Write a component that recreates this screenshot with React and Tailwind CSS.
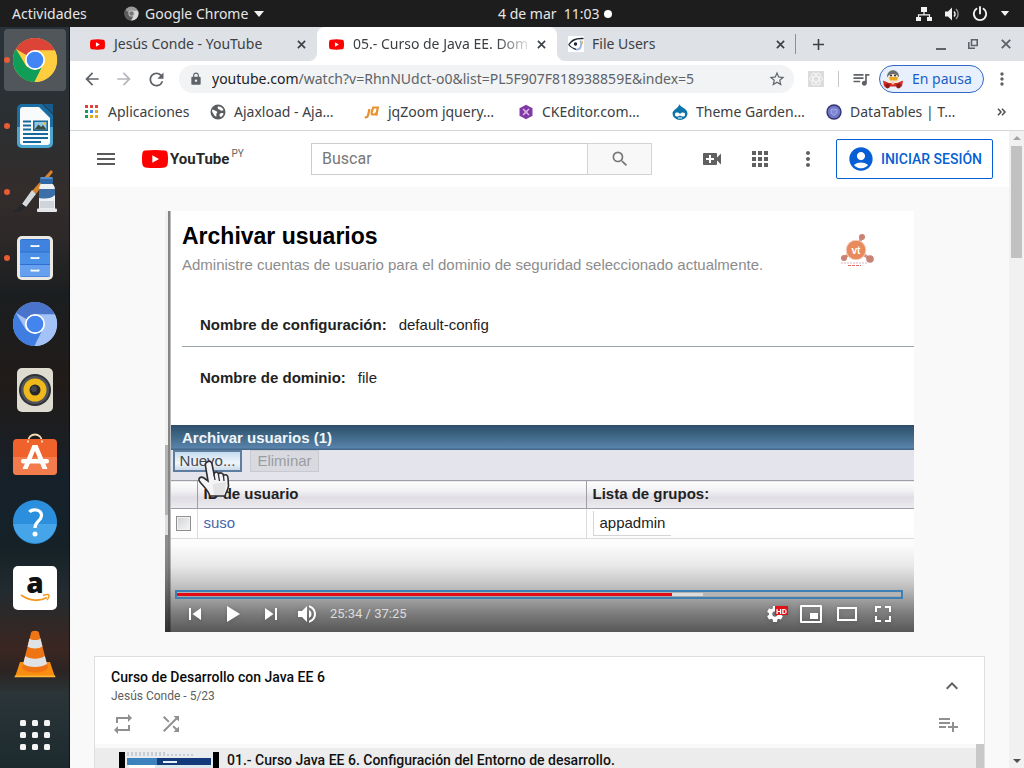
import React from "react";
import {
  MdMenu, MdSearch, MdVideoCall, MdApps, MdMoreVert, MdAccountCircle, MdRepeat, MdShuffle,
  MdPlaylistAdd, MdKeyboardArrowUp, MdLock, MdRefresh, MdArrowBack, MdArrowForward,
  MdStarBorder, MdPublic, MdQueueMusic, MdAdd,
} from "react-icons/md";

const ui = "font-['Noto_Sans','Open_Sans',sans-serif]";

/* ---------- dock icons ---------- */

function Chrome({ red = "#db4437", green = "#0f9d58", yellow = "#ffcd40", blue = "#4285f4" }) {
  return (
    <svg viewBox="0 0 48 48" className="size-[46px]">
      <circle cx="24" cy="24" r="23" fill={yellow} />
      <path d="M24 24 L4.1 12.5 A23 23 0 0 1 43.9 12.5 L44.8 14 H24Z" fill={red} />
      <path d="M4.1 12.5 L15 30.5 L24 34.5 L31.5 30.5 L23.5 47 A23 23 0 0 1 4.1 12.5Z" fill={green} />
      <path d="M24 14 H44.8 A23 23 0 0 1 23.5 47 L33 29Z" fill={yellow} />
      <circle cx="24" cy="24" r="10.5" fill="#fff" />
      <circle cx="24" cy="24" r="8.7" fill={blue} />
    </svg>
  );
}

function Writer() {
  return (
    <svg viewBox="0 0 38 46" className="h-[46px] w-[38px]">
      <path d="M6 1 H26 L37 12 V40 a5 5 0 0 1-5 5 H6 a5 5 0 0 1-5-5 V6 a5 5 0 0 1 5-5Z" fill="#1b6ea3" />
      <path d="M1 24 H37 V40 a5 5 0 0 1-5 5 H6 a5 5 0 0 1-5-5Z" fill="#4ba6cf" />
      <path d="M27 1 H37 V11Z" fill="#155c8c" />
      <path d="M7 4 H23 L34 15 V39 a3 3 0 0 1-3 3 H7 a3 3 0 0 1-3-3 V7 a3 3 0 0 1 3-3Z" fill="#f8fafb" />
      <g stroke="#16699c" strokeWidth="2">
        <path d="M7 18.5h8M7 22.5h8M7 26.5h8M7 31h25M7 35h25M7 39h18" />
      </g>
      <rect x="17" y="17.500" width="15" height="10.500" fill="#16699c" />
      <rect x="18.500" y="19" width="12" height="7.500" fill="#8fc6e6" />
      <path d="M18.500 26.500 l4-5 2.500 2.500 2-2 3.500 4.500Z" fill="#3b4a3c" />
      <circle cx="28" cy="20.500" r="1.200" fill="#f3c623" />
    </svg>
  );
}

function Paint() {
  return (
    <svg viewBox="0 0 46 46" className="size-[46px]">
      <path d="M39 1 L41 3 L24 25 L20 22Z" fill="#d9822b" />
      <path d="M20 21 L24 25 L14 38 L10 35Z" fill="#d5d9dc" />
      <path d="M10 35 L14 38 C11 42 6 43 1 43 C5 41 6 38 10 35Z" fill="#24262a" />
      <path d="M30 14 H39 Q43 16 43 21 V40 H27 V21 Q27 16 30 14Z" fill="#eef1f4" />
      <path d="M27 20 H43 V26 Q38 31 27 29Z" fill="#3c6ea8" />
      <path d="M28 32 h14 v7 h-14Z" fill="#cfd4da" />
      <rect x="28" y="8" width="13" height="7" rx="2" fill="#2f66a6" />
      <path d="M28.500 9 h12" stroke="#6b9bd0" strokeWidth="1.500" />
      <rect x="25" y="39.500" width="20" height="3.500" rx="1" fill="#e4e6e8" />
    </svg>
  );
}

function Drawer() {
  return (
    <svg viewBox="0 0 38 46" className="h-[46px] w-[38px]">
      <rect x="1" y="1" width="36" height="44" rx="5" fill="#ece9e2" />
      <rect x="4" y="4" width="30" height="38" rx="2" fill="#2f6fd0" />
      <rect x="4" y="5" width="30" height="11.500" fill="#3f83de" />
      <rect x="4" y="17.500" width="30" height="11.500" fill="#4a90e6" />
      <rect x="4" y="30" width="30" height="11.500" fill="#66a0ee" />
      <path d="M15.500 10v1.200h7V10M15.500 22v1.200h7V22M15.500 34.500v1.200h7v-1.200" fill="none" stroke="#fff" strokeWidth="1.800" />
    </svg>
  );
}

function Speaker() {
  return (
    <svg viewBox="0 0 38 46" className="h-[46px] w-[38px]">
      <rect x="1" y="1" width="36" height="44" rx="5" fill="#dedbd0" />
      <circle cx="19" cy="23" r="16" fill="#2e3136" />
      <circle cx="19" cy="23" r="14" fill="#51545a" />
      <circle cx="19" cy="23" r="11.500" fill="#efb91c" />
      <circle cx="19" cy="23" r="5.500" fill="#26282c" />
      <circle cx="18" cy="22" r="3" fill="#44474c" />
    </svg>
  );
}

function Software() {
  return (
    <svg viewBox="0 0 46 46" className="size-[46px]">
      <path d="M16 9 C16 -1 30 -1 30 9" fill="none" stroke="#f6dcb0" strokeWidth="1.800" />
      <rect x="1" y="6" width="44" height="36" rx="4" fill="#f0622b" />
      <path d="M1 24 h44 v14 a4 4 0 0 1-4 4 H5 a4 4 0 0 1-4-4Z" fill="#f37c4d" />
      <path d="M16 9.500v-2M30 9.500v-2" stroke="#f6dcb0" strokeWidth="2" />
      <path d="M20.500 12 h5 l10 24 h-5 L23 18 15.500 36 h-5Z" fill="#fff" />
      <rect x="9" y="26" width="28" height="4.500" rx="2.200" fill="#fff" />
    </svg>
  );
}

function Help() {
  return (
    <svg viewBox="0 0 46 46" className="size-[46px]">
      <circle cx="23" cy="23" r="22" fill="#2b8fdd" />
      <path d="M1.200 25 a22 22 0 0 0 43.600 0Z" fill="#46a5e8" />
      <path d="M17.500 13 C20 9.500 29.500 10 29.500 16.500 C29.500 22 23 22 23 29" fill="none" stroke="#fff" strokeWidth="3.200" />
      <circle cx="23" cy="35" r="2.500" fill="#fff" />
    </svg>
  );
}

function Amazon() {
  return (
    <svg viewBox="0 0 46 46" className="size-[46px]">
      <rect x="1" y="1" width="44" height="44" rx="5" fill="#fff" />
      <text x="23" y="28" textAnchor="middle" fontFamily="Open Sans, sans-serif" fontWeight="800" fontSize="28" fill="#111">a</text>
      <path d="M9 30 C18 36.500 28 36.500 35 32.500" fill="none" stroke="#f29a1f" strokeWidth="1.800" />
      <path d="M31 30.500 C34 29.500 37.500 29 37 30.500 C37 32.500 36 34 35 35" fill="none" stroke="#f29a1f" strokeWidth="1.400" />
    </svg>
  );
}

function Cone() {
  return (
    <svg viewBox="0 0 46 50" className="h-[50px] w-[46px]">
      <path d="M8 33 H38 L43 48 H3Z" fill="#f98d12" />
      <path d="M3 46.500h40l.5 1.800h-41Z" fill="#ffb733" />
      <path d="M19 4 C19 1 27 1 27 4 L36 39 C32 45 14 45 10 39Z" fill="#ee7414" />
      <path d="M17.500 9.500 C20 11.500 26 11.500 28.500 9.500 L30.500 17.500 C27 20 19 20 15.500 17.500Z" fill="#dfe3e6" />
      <path d="M13.200 27 C18 30.500 28 30.500 32.800 27 L35 35 C29 39 17 39 11.200 35Z" fill="#dfe3e6" />
    </svg>
  );
}

const DOCK = [
  { label: "Google Chrome", icon: <Chrome />, running: true, active: true },
  { label: "LibreOffice Writer", icon: <Writer />, running: true },
  { label: "Pintura", icon: <Paint />, running: true },
  { label: "Archivos", icon: <Drawer />, running: true },
  { label: "Chromium", icon: <Chrome red="#4a74c9" green="#3f7ee0" yellow="#a3c2f7" blue="#4384ee" /> },
  { label: "Rhythmbox", icon: <Speaker /> },
  { label: "Software de Ubuntu", icon: <Software /> },
  { label: "Ayuda", icon: <Help /> },
  { label: "Amazon", icon: <Amazon /> },
  { label: "VLC", icon: <Cone /> },
];

function Dock() {
  return (
    <nav className="flex w-[70px] shrink-0 flex-col items-center gap-1 overflow-hidden border-r border-black/50 bg-[linear-gradient(to_bottom,#293238_0,#2a3034_10%,#332d2c_22%,#2e2929_28%,#1b1e20_36%,#211b19_48%,#16212a_62%,#152127_70%,#222b2f_76%,#3b2621_84%,#2b2423_87%,#2b3538_90%,#1c2a2e_100%)] pt-[2px]">
      {DOCK.map((d) => (
        <button
          key={d.label}
          aria-label={d.label}
          className={
            d.active
              ? "relative flex size-[62px] shrink-0 items-center justify-center rounded bg-[#51565a]"
              : "relative flex size-[62px] shrink-0 items-center justify-center rounded"
          }
        >
          {d.running && <span className="absolute left-0 size-[6px] rounded-full bg-[#e95b33]" />}
          {d.icon}
        </button>
      ))}
      <button aria-label="Mostrar aplicaciones" className="mt-[15px] flex size-[62px] shrink-0 items-center justify-center">
        <svg viewBox="0 0 30 30" className="size-[30px]" fill="#f4f4f4">
          {[0, 12, 24].map((y) => [0, 12, 24].map((x) => <rect key={`${x}-${y}`} x={x} y={y} width="6" height="6" rx="1.500" />))}
        </svg>
      </button>
    </nav>
  );
}

/* ---------- system bar ---------- */

function TopBar() {
  return (
    <header className={`${ui} grid h-[27px] shrink-0 grid-cols-[498fr_418fr_108px] items-center bg-[#1d1d1d] text-sm text-[#e6e6e6]`}>
      <div className="flex items-center">
        <button className="w-[112px] pl-3 text-left">Actividades</button>
        <button className="flex items-center gap-[6px] pl-3">
          <svg viewBox="0 0 16 16" className="size-[15px]">
            <circle cx="8" cy="8" r="7.500" fill="#9a9a9a" />
            <path d="M1.500 4.200 A7.500 7.500 0 0 0 7.500 15.500 L10 10Z" fill="#5d5d5d" />
            <path d="M8 5 H14.800 A7.500 7.500 0 0 1 7.800 15.500 L11 9Z" fill="#d8d8d8" />
            <circle cx="8" cy="8" r="3.300" fill="#c9c9c9" />
            <circle cx="8" cy="8" r="2.400" fill="#777" />
          </svg>
          <span>Google Chrome</span>
          <svg viewBox="0 0 10 6" className="h-[6px] w-[10px]"><path d="M0 0h10L5 6Z" fill="#f2f2f2" /></svg>
        </button>
      </div>
      <button className="flex items-center gap-1">
        <time className="whitespace-pre">4 de mar  11:03</time>
        <span className="size-2 rounded-full bg-white" />
      </button>
      <button aria-label="Menú del sistema" className="flex items-center gap-3">
        <svg viewBox="0 0 16 16" className="size-4" fill="#f2f2f2">
          <path d="M5 1h6v5H5zM0 11h5v4H0zM11 11h5v4h-5z" />
          <path d="M8 6v3M2.500 11V8.800h11V11" fill="none" stroke="#f2f2f2" strokeWidth="1.200" />
        </svg>
        <svg viewBox="0 0 16 16" className="size-4" fill="#f2f2f2">
          <path d="M1 5.500h3L8 1.500v13l-4-4H1z" />
          <path d="M10 5.500a3.500 3.500 0 0 1 0 5" fill="none" stroke="#f2f2f2" strokeWidth="1.500" />
          <path d="M12 3a7 7 0 0 1 0 10" fill="none" stroke="#999" strokeWidth="1.400" />
        </svg>
        <svg viewBox="0 0 16 16" className="size-4" fill="none" stroke="#f2f2f2" strokeWidth="1.900" strokeLinecap="round">
          <path d="M4.500 2.800a6.200 6.200 0 1 0 7 0M8 1v6.500" />
        </svg>
        <svg viewBox="0 0 10 6" className="h-[5px] w-[10px]"><path d="M0 0h10L5 6Z" fill="#f2f2f2" /></svg>
      </button>
    </header>
  );
}

/* ---------- browser chrome ---------- */

function PlayBadge({ className }) {
  return (
    <svg viewBox="0 0 26 18" className={className}>
      <path d="M3 .6 Q13 -.4 23 .6 Q25.500 1 25.700 4 Q26.300 9 25.700 14 Q25.500 17 23 17.400 Q13 18.400 3 17.400 Q.5 17 .3 14 Q-.3 9 .3 4 Q.5 1 3 .6Z" fill="#f00" />
      <path d="M10.300 5.200 17 9l-6.700 3.800Z" fill="#fff" />
    </svg>
  );
}

function TabClose() {
  return (
    <button aria-label="Cerrar pestaña" className="flex size-4 shrink-0 items-center justify-center text-[#3c4043]">
      <svg viewBox="0 0 10 10" className="size-[9px]" stroke="currentColor" strokeWidth="1.800"><path d="M1 1l8 8M9 1L1 9" /></svg>
    </button>
  );
}

function TabStrip() {
  return (
    <div className="flex h-[34px] shrink-0 bg-white text-sm text-[#3c4043]">
      <div className="flex w-[247px] shrink-0 items-center rounded-br-[8px] bg-[#dee1e6] pr-2 pl-5">
        <PlayBadge className="mr-[9px] h-[11px] w-[15px] shrink-0" />
        <span className="flex-1 whitespace-nowrap">Jesús Conde - YouTube</span>
        <TabClose />
      </div>
      <div className="w-[240px] shrink-0 bg-[#dee1e6]">
        <div className="flex h-full items-center rounded-t-[8px] bg-white pr-2 pl-3">
          <PlayBadge className="mr-[9px] h-[11px] w-[15px] shrink-0" />
          <span className="flex-1 whitespace-nowrap [mask-image:linear-gradient(to_right,#000_80%,transparent_100%)]">05.- Curso de Java EE. Dom</span>
          <TabClose />
        </div>
      </div>
      <div className="flex flex-1 items-center rounded-bl-[8px] bg-[#dee1e6] pl-[11px]">
        <svg viewBox="0 0 16 16" className="mr-2 size-4 shrink-0">
          <rect width="16" height="16" fill="#fff" />
          <path d="M1 8.500 C4 3 9 2 15.500 2.500" fill="none" stroke="#1d2330" strokeWidth="1.500" />
          <path d="M.5 8.500 C3 12 6 12.500 8 13.500" fill="none" stroke="#1d2330" strokeWidth="1.200" />
          <circle cx="7.500" cy="8" r="1.700" fill="#1d2330" />
          <path d="M8 13.500 C13 14 14 9 12.500 4.500" fill="none" stroke="#9db0d8" strokeWidth="1.800" />
          <path d="M14.500 5v3" stroke="#e3b96a" />
        </svg>
        <span className="w-[180px]">File Users</span>
        <TabClose />
        <span className="ml-[7px] h-5 w-px bg-[#8d9095]" />
        <button aria-label="Nueva pestaña" className="ml-[11px] flex size-[22px] items-center justify-center"><MdAdd className="size-[19px]" /></button>
        <div className="flex flex-1 items-center justify-end gap-[19px] pr-[13px]">
          <button aria-label="Minimizar" className="flex h-4 w-4 items-end justify-center pb-[2px]"><span className="h-[2px] w-[10px] bg-[#5f6368]" /></button>
          <button aria-label="Restaurar">
            <svg viewBox="0 0 10 10" className="size-[10px]" fill="none" stroke="#5f6368" strokeWidth="1.600"><path d="M3.500.8h5.700v5.700H3.500ZM.8 3v6.200H7" /></svg>
          </button>
          <button aria-label="Cerrar" className="ml-1">
            <svg viewBox="0 0 10 10" className="size-[10px]" stroke="#5f6368" strokeWidth="1.900"><path d="M.8.800l8.400 8.400M9.200.800L.8 9.200" /></svg>
          </button>
        </div>
      </div>
    </div>
  );
}

function Toolbar() {
  return (
    <div className="flex h-9 shrink-0 items-center bg-white text-sm text-[#5f6368]">
      <button aria-label="Atrás" className="ml-[6px] flex w-8 justify-center"><MdArrowBack className="size-5" /></button>
      <button aria-label="Adelante" className="flex w-8 justify-center text-[#b4b7ba]"><MdArrowForward className="size-5" /></button>
      <button aria-label="Recargar" className="flex w-8 justify-center"><MdRefresh className="size-[21px]" /></button>
      <div className="ml-[7px] flex h-7 min-w-0 flex-1 items-center rounded-full bg-[#f1f3f4] pr-2 pl-[10px]">
        <MdLock className="mr-[9px] size-[14px] shrink-0" />
        <span className="flex-1 overflow-hidden whitespace-nowrap">
          <span className="text-[#202124]">youtube.com</span>/watch?v=RhnNUdct-o0&amp;list=PL5F907F818938859E&amp;index=5
        </span>
        <button aria-label="Añadir a marcadores"><MdStarBorder className="size-[18px]" /></button>
      </div>
      <button aria-label="Extensión" className="ml-[14px] flex size-4 items-center justify-center bg-[#dcdcdc]">
        <svg viewBox="0 0 16 16" className="size-4" fill="none" stroke="#f6f6f6"><ellipse cx="8" cy="8" rx="6.500" ry="2.600" /><ellipse cx="8" cy="8" rx="6.500" ry="2.600" transform="rotate(60 8 8)" /><ellipse cx="8" cy="8" rx="6.500" ry="2.600" transform="rotate(120 8 8)" /></svg>
      </button>
      <span className="ml-[14px] h-4 w-px bg-[#c6c9cc]" />
      <button aria-label="Control multimedia" className="mr-2 ml-3"><MdQueueMusic className="size-5" /></button>
      <button className="flex h-7 w-[105px] items-center gap-[9px] rounded-full border border-[#3367c6] bg-[#e8f0fe] pl-[3px] text-[#1a5fc4]">
        <svg viewBox="0 0 20 20" className="size-5 shrink-0">
          <path d="M4 8 C4 -1 16 -1 16 8Z" fill="#6d6d6d" />
          <ellipse cx="10" cy="10" rx="6" ry="5" fill="#f4ead8" />
          <path d="M6 8 h9 l-1 3.500 H7Z" fill="#e9a820" />
          <circle cx="8" cy="6.500" r="1" fill="#222" /><circle cx="12" cy="6.500" r="1" fill="#222" />
          <path d="M0 11.500 L6 14 H14 L20 11.500 L19 17.500 H1Z" fill="#d62a20" />
          <circle cx="4.500" cy="17" r="2.400" fill="#8f1b16" /><circle cx="15.500" cy="17" r="2.400" fill="#8f1b16" />
          <circle cx="10" cy="14" r="1.600" fill="#f6c2b2" />
        </svg>
        <span className="whitespace-nowrap">En pausa</span>
      </button>
      <button aria-label="Menú" className="mr-3 ml-2"><MdMoreVert className="size-5" /></button>
    </div>
  );
}

const BOOKMARKS = [
  {
    label: "Ajaxload - Aja…",
    icon: (
      <svg viewBox="0 0 16 16" className="size-4">
        <circle cx="8" cy="8" r="7.500" fill="#5a5d60" />
        <path d="M2 6 C4 5 5 7 7 7.500 C8 9 5.500 9.500 6.500 11.500 C6.800 13 5 12.500 4 11 C3.500 9 2 9 2 6ZM8 2.500 C10 2 12.500 3.500 13.500 6 C12 7.500 10.500 6.500 9.500 5.500 C8 5.500 7 4 8 2.500ZM10 9.500 C12 8.500 13.500 9 13.500 10 C12.500 12 11.500 13 10.500 13 C9.500 12 9 10.500 10 9.500Z" fill="#fff" />
      </svg>
    ),
  },
  {
    label: "jqZoom jquery…",
    icon: (
      <svg viewBox="0 0 16 16" className="size-4" fill="none" stroke="#e8912d" strokeWidth="2.200">
        <path d="M5.500 5 L4 11.500 Q3.500 13.700 .8 13.200M9.300 3.500h4.500L12.500 10.500H8.700Q7.300 10.500 7.700 8.300T9.300 3.500ZM11.500 8.500l1.500 3" />
      </svg>
    ),
  },
  {
    label: "CKEditor.com…",
    icon: (
      <svg viewBox="0 0 16 16" className="size-4">
        <path d="M8 .8 14.500 4.300v7.400L8 15.200 1.500 11.700V4.300Z" fill="#8039a6" />
        <path d="M5 5l2 2h2l2-2M5 11l2-2h2l2 2M7 7v2M9 7v2" fill="none" stroke="#e3c4f3" strokeWidth="1.200" />
      </svg>
    ),
  },
  {
    label: "Theme Garden…",
    icon: (
      <svg viewBox="0 0 16 16" className="size-4">
        <path d="M7 0 C8 3 15.500 4.500 15.500 9.500 A7.500 6.500 0 0 1 .5 9.500 C.5 5.500 7.500 4 7 0Z" fill="#0c76ab" />
        <path d="M3 10.500 C3 8 6 8 8 10 C10 8 13.500 8 13 11 C12.500 13.500 10 12.500 8 11.500 C6 13 3 13 3 10.500Z" fill="#fff" />
        <path d="M6 14h4" stroke="#fff" />
      </svg>
    ),
  },
  {
    label: "DataTables | T…",
    icon: (
      <svg viewBox="0 0 16 16" className="size-4">
        <circle cx="8" cy="8" r="7.700" fill="#33346b" />
        <circle cx="8" cy="8" r="6.300" fill="#7076c8" />
        <path d="M5 5.500 Q8 4.500 11 5.500 V9 L8 11.500 5 9Z" fill="#8288d8" stroke="#b4b9ec" strokeWidth=".8" />
      </svg>
    ),
  },
];

function BookmarkBar() {
  const dots = ["#db4437", "#db4437", "#db4437", "#0f9d58", "#4285f4", "#e5a823", "#0f9d58", "#e5a823", "#e5a823"];
  return (
    <div className="flex h-[34px] shrink-0 items-center border-b border-[#d4d6d8] bg-white pb-1 pl-[14px] text-sm text-[#3c4043]">
      <a href="#apps" className="flex w-[126px] shrink-0 items-center gap-[9px]">
        <span className="grid size-[15px] shrink-0 grid-cols-3 place-content-center gap-[2px] p-px">
          {dots.map((c, i) => (
            <span key={i} className="size-[3px]" style={{ backgroundColor: c }} />
          ))}
        </span>
        Aplicaciones
      </a>
      {BOOKMARKS.map((b) => (
        <a key={b.label} href="#bookmark" className="flex w-[154px] shrink-0 items-center gap-2 whitespace-nowrap">
          {b.icon}
          {b.label}
        </a>
      ))}
      <button aria-label="Más marcadores" className="ml-auto pr-[18px]">
        <svg viewBox="0 0 9 8" className="h-2 w-[9px]" fill="none" stroke="#4a4d51" strokeWidth="1.500"><path d="M1 .7 4 4 1 7.300M5 .7 8 4 5 7.300" /></svg>
      </button>
    </div>
  );
}

/* ---------- YouTube page ---------- */

function Masthead() {
  return (
    <header className="flex h-14 shrink-0 items-center bg-white pr-4 pl-6 font-[Roboto,sans-serif]">
      <button aria-label="Guía"><MdMenu className="size-6 text-[#5a5a5a]" /></button>
      <a href="#home" className="ml-6 flex items-center gap-[2px]">
        <PlayBadge className="h-[18px] w-[26px]" />
        <span className="text-[15px] font-bold text-[#282828]">YouTube</span>
        <span className="mb-3 text-[10px] text-[#666]">PY</span>
      </a>
      <form className="mr-12 ml-auto flex h-8 w-[341px]" onSubmit={(e) => e.preventDefault()}>
        <input aria-label="Buscar" placeholder="Buscar" className="min-w-0 flex-1 border border-[#ccc] bg-white px-[10px] text-base placeholder:text-[#777]" />
        <button aria-label="Buscar" className="-ml-px flex w-[65px] items-center justify-center border border-[#d3d3d3] bg-[#f8f8f8]">
          <MdSearch className="size-5 text-[#777]" />
        </button>
      </form>
      <div className="flex items-center gap-6 text-[#606060]">
        <button aria-label="Crear"><MdVideoCall className="size-6" /></button>
        <button aria-label="Aplicaciones de YouTube"><MdApps className="size-6" /></button>
        <button aria-label="Configuración"><MdMoreVert className="size-6" /></button>
      </div>
      <a href="#login" className="ml-4 flex h-10 w-[157px] items-center justify-center gap-[6px] rounded-[2px] border border-[#065fd4] text-sm font-medium whitespace-nowrap text-[#065fd4]">
        <MdAccountCircle className="size-7" />
        INICIAR SESIÓN
      </a>
    </header>
  );
}

function HandCursor() {
  return (
    <svg viewBox="0 0 34 40" className="absolute top-[248px] left-[32px] h-[40px] w-[34px]">
      <path d="M10 3 C13 1 14.500 3 15 5 L17 15 C18 12 21 12.500 21.500 15 C23 13 26 14 26.500 16.500 C28.500 15 31 16 31 19 L31.500 27 C31 31 29 33 28 37 L13 37 C11 31 6 27 3 23 C0 19 4 17 7 19 L11 22 L8.500 7 C8 5 9 3.500 10 3Z" fill="#f4f3f5" stroke="#2e2e33" strokeWidth="1.600" />
      <path d="M17 15l1 6M21.500 16l1 6M26.500 17l.5 5" stroke="#2e2e33" strokeWidth="1.300" />
      <path d="M16 25 L29 23 L27 36 H17Z" fill="#d2d2d6" opacity=".5" />
    </svg>
  );
}

function Glyph({ label, className, children }) {
  return (
    <button aria-label={label} className={className}>
      <svg viewBox="0 0 36 36" className="size-9 drop-shadow-sm" fill="#fff">{children}</svg>
    </button>
  );
}

function Frame() {
  return (
    <div className="flex h-full">
      <div className="flex w-[3px] shrink-0 flex-col">
        <div className="h-[234px] bg-[#f1f1f1]" />
        <div className="h-[70px] bg-[#b4b4b4]" />
        <div className="h-[20px] bg-[#dedede]" />
        <div className="flex-1 bg-[#8f8f8f]" />
      </div>
      <div className="w-[3px] shrink-0 border-r border-[#bdbdbd] bg-[#858585]" />
      <div className="min-w-0 flex-1 bg-white font-['Liberation_Sans',Arial,sans-serif] text-[#222]">
        <div className="flex items-start justify-between pr-[39px] pl-[11px]">
          <div className="pt-[11px]">
            <h2 className="text-[23px] leading-[28px] font-bold text-black">Archivar usuarios</h2>
            <p className="text-[15px] leading-[29px] whitespace-nowrap text-[#8c8c8c]">
              Administre cuentas de usuario para el dominio de seguridad seleccionado actualmente.
            </p>
          </div>
          <svg viewBox="0 0 36 36" className="mt-[22px] size-9">
            <g stroke="#d99683" strokeWidth="3"><path d="M17 16 L23 4M17 16 L5 25M17 16 L31 26" /></g>
            <circle cx="23" cy="4" r="3" fill="#c98273" /><circle cx="5" cy="25" r="3" fill="#c98273" /><circle cx="31" cy="26" r="3.800" fill="#c98273" />
            <circle cx="17" cy="17" r="9.800" fill="#e88a5c" stroke="#f4cfc0" />
            <text x="17" y="20.500" textAnchor="middle" fontSize="10" fontWeight="700" fill="#fff">vt</text>
            <path d="M2 30h26" stroke="#d9b3b8" strokeWidth="1" strokeDasharray="2 1" /><path d="M9 32.500h13" stroke="#e06a6a" strokeWidth="1.200" strokeDasharray="3 1" />
          </svg>
        </div>
        <dl className="flex flex-col pl-[11px] text-[15px]">
          <div className="flex h-[68px] items-end gap-3 border-b border-[#9aa5ab] pb-[10px] pl-[18px] leading-[22px]">
            <dt className="font-bold">Nombre de configuración:</dt>
            <dd>default-config</dd>
          </div>
          <div className="flex h-[78px] items-start gap-3 pt-5 pl-[18px] leading-[22px]">
            <dt className="font-bold">Nombre de dominio:</dt>
            <dd>file</dd>
          </div>
        </dl>
        <h3 className="h-[25px] bg-[linear-gradient(to_bottom,#2d4e6b_0,#3d6583_40%,#5882a9_90%,#3f6285_100%)] pl-[11px] text-[15px] leading-[26px] font-bold text-[#f2f5f8]">
          Archivar usuarios (1)
        </h3>
        <div className="flex h-[30px] items-start gap-2 bg-[#e4e5ec] pl-[2px] text-[15px] leading-[18px]">
          <button className="h-[22px] w-[69px] border-2 border-[#5f7d9e] bg-[linear-gradient(to_bottom,#c6dcf2,#f0f5fa_60%,#c9daea)] text-[#44464c]">Nuevo...</button>
          <button disabled className="h-[22px] w-[69px] border border-[#c8cad0] bg-[#d8dadf] text-[#9b9ca2]">Eliminar</button>
        </div>
        <table className="w-full table-fixed border-collapse text-left text-[15px]">
          <colgroup>
            <col className="w-[26px]" /><col className="w-[389px]" /><col />
          </colgroup>
          <thead>
            <tr className="h-7 border-y border-[#9d9ea6] bg-[linear-gradient(to_bottom,#fdfdfd_0,#f1f0f3_35%,#e0dee4_60%,#ecebef_100%)]">
              <th className="border-r border-[#9d9ea6]" aria-label="Seleccionar" />
              <th className="border-r border-[#9d9ea6] px-[6px] font-bold">ID de usuario</th>
              <th className="px-[6px] font-bold">Lista de grupos:</th>
            </tr>
          </thead>
          <tbody>
            <tr className="h-[30px] border-b border-[#dcdce0]">
              <td className="border-r border-[#dcdce0] pl-[5px]">
                <input type="checkbox" aria-label="Seleccionar suso" className="block size-[15px] appearance-none border border-[#8e8f8f] bg-[linear-gradient(135deg,#cfd1d3,#f8f8f8)] shadow-[inset_0_0_0_1px_#f2f2f2]" />
              </td>
              <td className="border-r border-[#dcdce0] px-[6px]"><a href="#suso" className="text-[#4866ab]">suso</a></td>
              <td className="px-[6px]"><span className="block w-[78px] border-b border-l border-[#d6d6da] pl-[6px] leading-[24px]">appadmin</span></td>
            </tr>
          </tbody>
        </table>
      </div>
    </div>
  );
}

function Player() {
  return (
    <section aria-label="Reproductor" className="relative mx-auto mt-6 h-[421px] w-full max-w-[749px] shrink-0 overflow-hidden">
      <Frame />
      <HandCursor />
      <div className="absolute inset-x-0 bottom-0 flex h-[110px] flex-col justify-end bg-[linear-gradient(to_bottom,transparent_0,rgb(0_0_0/.01)_20%,rgb(0_0_0/.09)_40%,rgb(0_0_0/.26)_60%,rgb(0_0_0/.5)_82%,rgb(0_0_0/.66)_100%)] font-[Roboto,sans-serif]">
        <input
          type="range"
          aria-label="Barra de progreso"
          min="0"
          max="2245"
          defaultValue="1534"
          className="mr-[11px] ml-[10px] h-[9px] appearance-none border-2 border-[#3f80b4] bg-[linear-gradient(to_right,#e50914_0_68.4%,#dcdcdc_68.4%_72.6%,#b5b5b5_72.6%)] bg-clip-content py-px [&::-webkit-slider-thumb]:size-0 [&::-webkit-slider-thumb]:appearance-none"
        />
        <div className="flex h-[33px] items-center justify-between pr-[13px] pb-[3px] pl-[11px]">
          <div className="flex items-center">
            <Glyph label="Anterior" className="flex w-[38px] justify-center"><path d="M12 12h2v12h-2zM15.500 18l8.500 6V12z" /></Glyph>
            <Glyph label="Reproducir" className="flex w-[38px] justify-center"><path d="M12 10v16l13-8z" /></Glyph>
            <Glyph label="Siguiente" className="flex w-[38px] justify-center"><path d="M12 24l8.500-6L12 12zM22 12v12h2V12z" /></Glyph>
            <Glyph label="Silenciar" className="flex w-9 justify-center"><path d="M8 21h4l5 5V10l-5 5H8zM19 14v8c1.480-.68 2.500-2.230 2.500-4s-1.020-3.260-2.500-4zM19 11.290c2.890.86 5 3.540 5 6.710s-2.110 5.850-5 6.710v2.060c4.010-.91 7-4.490 7-8.770s-2.990-7.860-7-8.770z" /></Glyph>
            <span className="ml-1 text-[13px] text-[#ddd]">25:34 / 37:25</span>
          </div>
          <div className="flex items-center">
            <Glyph label="Configuración" className="flex w-9">
              <path d="M23.940 18.780c.03-.25.05-.51.05-.78s-.02-.52-.05-.78l1.680-1.320c.15-.12.19-.33.09-.51l-1.600-2.760c-.09-.17-.31-.24-.48-.17l-1.990.8c-.41-.32-.86-.58-1.350-.78l-.3-2.120c-.02-.19-.19-.33-.39-.33h-3.200c-.2 0-.36.14-.39.33l-.3 2.120c-.48.2-.93.47-1.350.78l-1.990-.8c-.18-.07-.39 0-.48.17l-1.600 2.760c-.1.17-.05.39.09.51l1.680 1.320c-.03.25-.05.52-.05.78s.02.52.05.78l-1.680 1.320c-.15.12-.19.33-.09.51l1.600 2.760c.09.17.31.24.48.17l1.990-.8c.41.32.86.58 1.350.78l.3 2.120c.02.19.19.33.39.33h3.200c.2 0 .36-.14.39-.33l.3-2.120c.48-.2.93-.47 1.350-.78l1.990.8c.18.07.39 0 .48-.17l1.600-2.760c.09-.17.05-.39-.09-.51zM18 20.790c-1.540 0-2.800-1.250-2.800-2.800s1.250-2.800 2.800-2.800 2.800 1.250 2.800 2.800-1.250 2.800-2.800 2.800z" />
              <rect x="18" y="10" width="13" height="9" fill="#e1131a" />
              <text x="24.500" y="17.500" textAnchor="middle" fontSize="8" fontWeight="700">HD</text>
            </Glyph>
            <Glyph label="Minirreproductor" className="flex w-9"><path d="M8 9h20q1 0 1 1v16q0 1-1 1H8q-1 0-1-1V10q0-1 1-1zM9 11v14h18V11zM17 17h8v6h-8z" fillRule="evenodd" /></Glyph>
            <Glyph label="Modo cine" className="flex w-9"><path d="M8 11h20v14H8zM10 13v10h16V13z" fillRule="evenodd" /></Glyph>
            <Glyph label="Pantalla completa" className="flex w-9"><path d="M10 16h2v-4h4v-2h-6zM20 10v2h4v4h2v-6zM24 24h-4v2h6v-6h-2zM12 20h-2v6h6v-2h-4z" /></Glyph>
          </div>
        </div>
      </div>
    </section>
  );
}

function Playlist() {
  return (
    <section className="mx-6 mt-6 min-h-0 flex-1 overflow-hidden border border-[#dedede] border-b-0 bg-white font-[Roboto,sans-serif]">
      <div className="flex h-[87px] justify-between pt-[10px] pr-6 pl-4">
        <div>
          <h2 className="text-sm leading-5 font-medium text-[#0a0a0a]">Curso de Desarrollo con Java EE 6</h2>
          <p className="text-xs leading-[18px] text-[#606060]">Jesús Conde - 5/23</p>
          <div className="flex gap-6 pt-[7px] text-[#909090]">
            <button aria-label="Repetir"><MdRepeat className="size-6" /></button>
            <button aria-label="Aleatorio"><MdShuffle className="size-6" /></button>
          </div>
        </div>
        <div className="flex flex-col items-end gap-[14px] pt-[7px]">
          <button aria-label="Contraer"><MdKeyboardArrowUp className="-mr-1 size-6 text-[#606060]" /></button>
          <button aria-label="Guardar lista"><MdPlaylistAdd className="size-6 text-[#909090]" /></button>
        </div>
      </div>
      <div className="flex">
        <div className="h-[68px] min-w-0 flex-1 border-t-4 border-[#f9f9f9] bg-[#ececec] pt-1 pl-6">
          <a href="#video" className="flex items-start gap-2">
            <svg viewBox="0 0 100 56" className="h-14 w-[100px]">
              <rect width="100" height="56" fill="#000" />
              <rect x="6" width="88" height="56" fill="#e9edf0" />
              <path d="M8 3h68M8 1h40" stroke="#a9adb2" strokeDasharray="2 2" />
              <path d="M8 6h84v7H8z" fill="#123a7a" /><path d="M8 6h30v7H8z" fill="#3c82bd" />
              <path d="M44 10h14" stroke="#e6f0fa" strokeWidth="2" />
              <path d="M10 13h26v40H10z" fill="#fff" /><path d="M36 13h56v3H36z" fill="#dbe8ee" />
            </svg>
            <span className="text-sm leading-4 font-medium text-[#111]">01.- Curso Java EE 6. Configuración del Entorno de desarrollo.</span>
          </a>
        </div>
        <div className="w-2 bg-[#c8c8c8]" />
      </div>
    </section>
  );
}

function PageScrollbar() {
  return (
    <div className="flex w-[15px] shrink-0 flex-col items-center justify-between bg-[#f1f1f1] py-[5px]">
      <div className="flex flex-col items-center gap-[6px]">
        <svg viewBox="0 0 8 4" className="h-1 w-2"><path d="M0 4h8L4 0Z" fill="#a3a3a3" /></svg>
        <div className="h-28 w-[11px] bg-[#c1c1c1]" />
      </div>
      <svg viewBox="0 0 8 4" className="h-1 w-2"><path d="M0 0h8L4 4Z" fill="#505050" /></svg>
    </div>
  );
}

export default function App() {
  return (
    <div className="flex h-screen flex-col overflow-hidden">
      <TopBar />
      <div className="flex min-h-0 flex-1">
        <Dock />
        <div className={`${ui} flex min-w-0 flex-1 flex-col`}>
          <TabStrip />
          <Toolbar />
          <BookmarkBar />
          <div className="flex min-h-0 flex-1">
            <main className="flex min-w-0 flex-1 flex-col overflow-hidden bg-[#f9f9f9]">
              <Masthead />
              <Player />
              <Playlist />
            </main>
            <PageScrollbar />
          </div>
        </div>
      </div>
    </div>
  );
}
